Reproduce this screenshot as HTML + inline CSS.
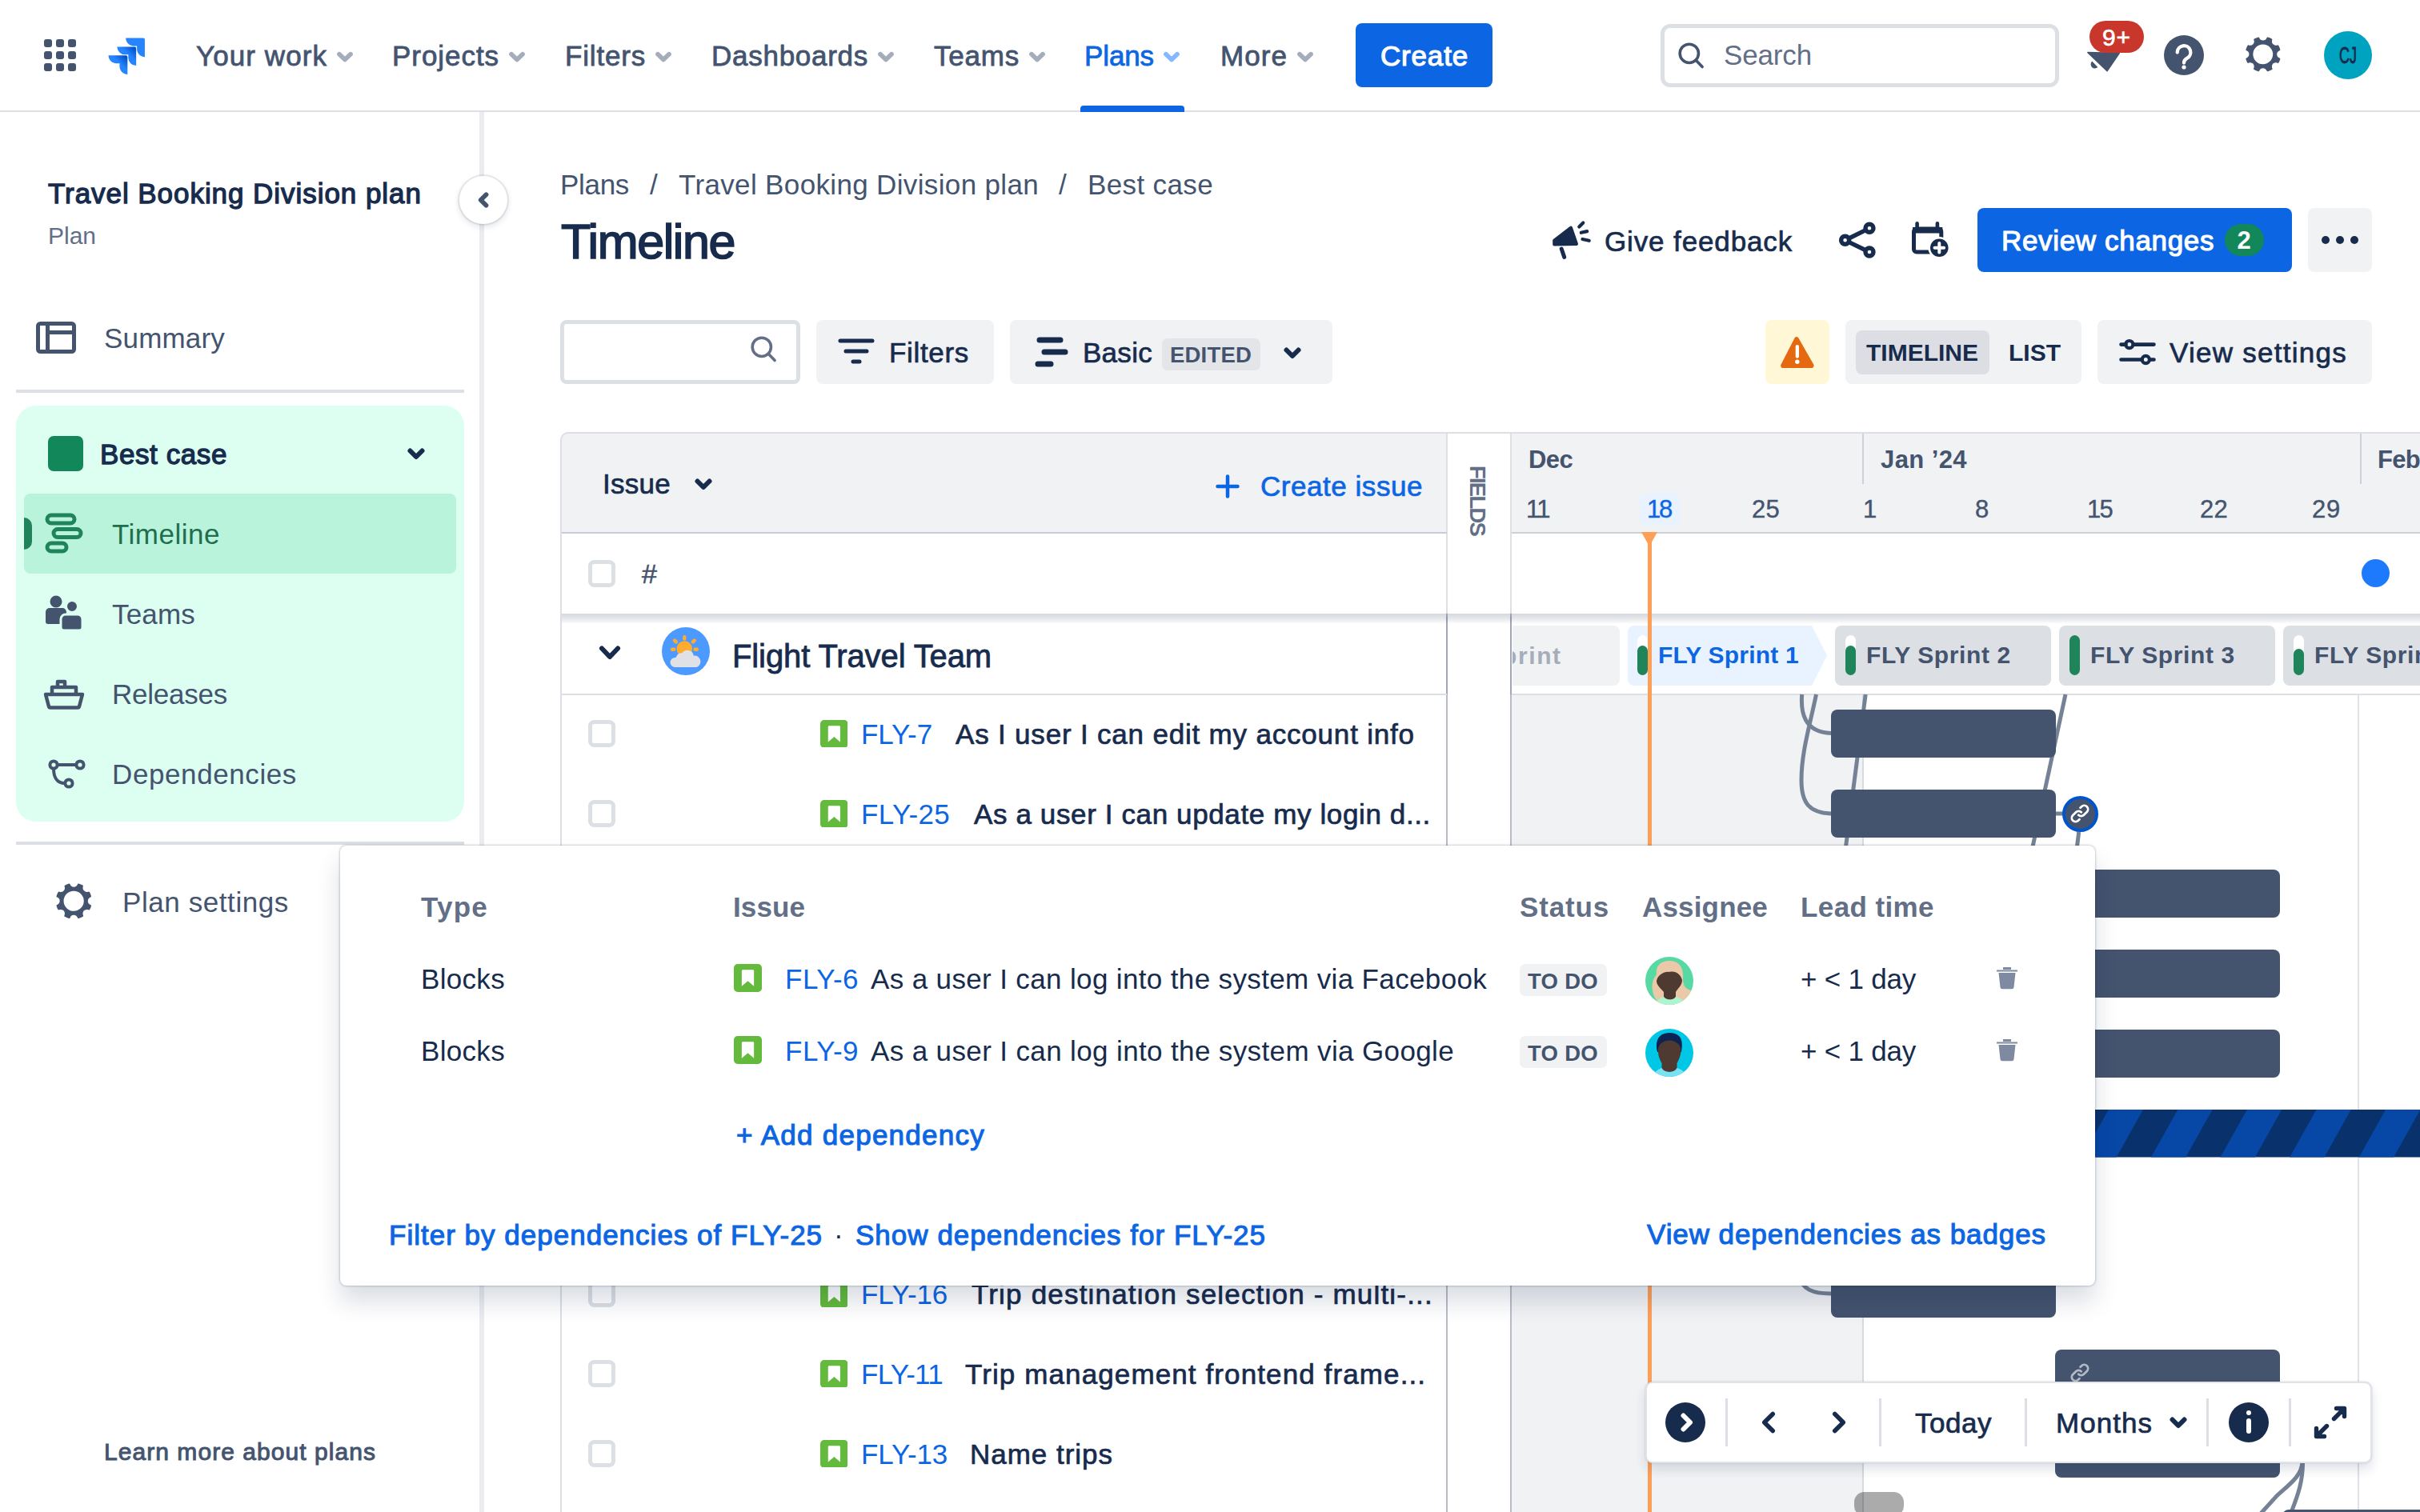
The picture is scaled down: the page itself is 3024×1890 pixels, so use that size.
<!DOCTYPE html>
<html><head><meta charset="utf-8"><title>Timeline - Jira</title><style>
html,body{margin:0;padding:0;}
body{width:3024px;height:1890px;position:relative;overflow:hidden;background:#fff;font-family:"Liberation Sans", sans-serif;}
.a{position:absolute;box-sizing:border-box;}
.t{position:absolute;white-space:pre;line-height:1;font-family:"Liberation Sans", sans-serif;}

</style></head><body>
<div class="a" style="left:598.5px;top:140px;width:6.2px;height:1750px;background:#EBECF0;"></div>
<div class="a" style="left:574px;top:220px;width:60px;height:60px;background:#fff;border-radius:30px;box-shadow:0 0 0 2px rgba(9,30,66,0.08),0 3px 8px rgba(9,30,66,0.14);"></div>
<svg class="a" style="left:574px;top:220px;" width="60" height="60" viewBox="0 0 24 24"><path d="M13.4 9.3 L10.7 12 L13.4 14.7" fill="none" stroke="#44546F" stroke-width="2.3" stroke-linecap="round" stroke-linejoin="round"/></svg>
<div class="t" style="left:60.0px;top:223.9px;font-size:35px;color:#172B4D;letter-spacing:0.95px;-webkit-text-stroke:1.3px #172B4D;">Travel Booking Division plan</div>
<div class="t" style="left:60.0px;top:280.3px;font-size:30px;color:#626F86;letter-spacing:-0.01px;">Plan</div>
<svg class="a" style="left:45px;top:400px;" width="50" height="44" viewBox="0 0 50 40"><rect x="2.5" y="2.5" width="45" height="35" rx="3" fill="none" stroke="#44546F" stroke-width="5"/><path d="M14.5 3v35M14.5 13.5H47" stroke="#44546F" stroke-width="5" fill="none"/></svg>
<div class="t" style="left:130.0px;top:404.5px;font-size:35px;color:#44546F;letter-spacing:0.18px;">Summary</div>
<div class="a" style="left:20px;top:487px;width:560px;height:4px;background:#DCDFE4;"></div>
<div class="a" style="left:20px;top:507px;width:560px;height:520px;background:#DCFFF1;border-radius:25px;"></div>
<div class="a" style="left:60px;top:545px;width:44px;height:44px;background:#12875A;border-radius:7px;"></div>
<div class="t" style="left:125.0px;top:549.9px;font-size:35px;color:#172B4D;letter-spacing:0.59px;-webkit-text-stroke:1.3px #172B4D;">Best case</div>
<svg class="a" style="left:490px;top:537px;" width="60" height="60" viewBox="0 0 24 24"><path d="M9 10.6 L12 13.6 L15 10.6" fill="none" stroke="#172B4D" stroke-width="2.4" stroke-linecap="round" stroke-linejoin="round"/></svg>
<div class="a" style="left:30px;top:617px;width:540px;height:100px;background:#BAF3DB;border-radius:8px;"></div>
<div class="a" style="left:30px;top:647px;width:10px;height:40px;background:#1F845A;border-radius:0 10px 10px 0;"></div>
<svg class="a" style="left:56px;top:641px;" width="48" height="52" viewBox="0 0 48 52"><rect x="3" y="3" width="34" height="10" rx="5" fill="none" stroke="#1F845A" stroke-width="5"/><rect x="11" y="20.5" width="34" height="10" rx="5" fill="none" stroke="#1F845A" stroke-width="5"/><rect x="3" y="38" width="24" height="10" rx="5" fill="none" stroke="#1F845A" stroke-width="5"/></svg>
<div class="t" style="left:140.0px;top:649.5px;font-size:35px;color:#216E4E;letter-spacing:0.50px;">Timeline</div>
<svg class="a" style="left:56px;top:743px;" width="48" height="48" viewBox="0 0 48 48"><circle cx="14" cy="9" r="7.5" fill="#44546F"/><path d="M1 22a5 5 0 0 1 5-5h16a5 5 0 0 1 5 5v12a3 3 0 0 1-3 3H4a3 3 0 0 1-3-3z" fill="#44546F"/><circle cx="34" cy="15" r="7.5" fill="#44546F" stroke="#DCFFF1" stroke-width="3"/><path d="M20 31a6 6 0 0 1 6-6h15a6 6 0 0 1 6 6v10a4 4 0 0 1-4 4H24a4 4 0 0 1-4-4z" fill="#44546F" stroke="#DCFFF1" stroke-width="3"/></svg>
<div class="t" style="left:140.0px;top:749.5px;font-size:35px;color:#44546F;letter-spacing:0.18px;">Teams</div>
<svg class="a" style="left:54px;top:848px;" width="52" height="40" viewBox="0 0 52 40"><path d="M3 20h46l-4 15a2 2 0 0 1-2 1.5H9a2 2 0 0 1-2-1.5z" fill="none" stroke="#44546F" stroke-width="4.5" stroke-linejoin="round"/><path d="M11 19v-8h30v8" fill="none" stroke="#44546F" stroke-width="4.5" stroke-linejoin="round"/><path d="M18 10V4h9v6" fill="none" stroke="#44546F" stroke-width="4.5" stroke-linejoin="round"/></svg>
<div class="t" style="left:140.0px;top:849.5px;font-size:35px;color:#44546F;letter-spacing:-0.24px;">Releases</div>
<svg class="a" style="left:60px;top:948px;" width="48" height="40" viewBox="0 0 48 40"><circle cx="7" cy="8" r="4.6" fill="none" stroke="#44546F" stroke-width="4"/><circle cx="40" cy="8" r="4.6" fill="none" stroke="#44546F" stroke-width="4"/><circle cx="26" cy="31" r="4.6" fill="none" stroke="#44546F" stroke-width="4"/><path d="M12 8H35M7 13c0 10 4 18 14 18" fill="none" stroke="#44546F" stroke-width="4"/></svg>
<div class="t" style="left:140.0px;top:949.5px;font-size:35px;color:#44546F;letter-spacing:0.60px;">Dependencies</div>
<div class="a" style="left:20px;top:1052px;width:560px;height:4px;background:#DCDFE4;"></div>
<svg class="a" style="left:62.8px;top:1097px;" width="60" height="60" viewBox="0 0 24 24"><path d="M11.701 16.7a5.002 5.002 0 1 1 0-10.003 5.002 5.002 0 0 1 0 10.004m8.368-3.117a1.995 1.995 0 0 1-1.346-1.885c0-.876.563-1.613 1.345-1.885a.48.48 0 0 0 .315-.574 8.947 8.947 0 0 0-.836-1.993.477.477 0 0 0-.598-.195 2.04 2.04 0 0 1-1.29.08 1.988 1.988 0 0 1-1.404-1.395 2.04 2.04 0 0 1 .076-1.297.478.478 0 0 0-.196-.597 8.98 8.98 0 0 0-1.975-.826.479.479 0 0 0-.574.314 1.995 1.995 0 0 1-1.885 1.346 1.994 1.994 0 0 1-1.884-1.345.482.482 0 0 0-.575-.315c-.708.2-1.379.485-2.004.842a.47.47 0 0 0-.198.582A2.002 2.002 0 0 1 4.445 7.06a.478.478 0 0 0-.595.196 8.946 8.946 0 0 0-.833 1.994.48.48 0 0 0 .308.572 1.995 1.995 0 0 1 1.323 1.877c0 .867-.552 1.599-1.324 1.877a.479.479 0 0 0-.308.57 8.99 8.99 0 0 0 .723 1.79.477.477 0 0 0 .624.194c.595-.273 1.343-.264 2.104.238.117.077.225.185.302.3.527.8.512 1.58.198 2.188a.473.473 0 0 0 .168.628 8.946 8.946 0 0 0 2.11.897.474.474 0 0 0 .57-.313 1.995 1.995 0 0 1 1.886-1.353c.878 0 1.618.567 1.887 1.353a.475.475 0 0 0 .57.313 8.964 8.964 0 0 0 2.084-.883.473.473 0 0 0 .167-.631c-.318-.608-.337-1.393.191-2.195.077-.116.185-.225.302-.302.772-.511 1.527-.513 2.125-.23a.477.477 0 0 0 .628-.19 8.925 8.925 0 0 0 .728-1.793.478.478 0 0 0-.314-.573" fill="#44546F" fill-rule="evenodd"/></svg>
<div class="t" style="left:153.0px;top:1109.9px;font-size:35px;color:#44546F;letter-spacing:0.58px;">Plan settings</div>
<div class="t" style="left:130.0px;top:1800.3px;font-size:30px;color:#44546F;letter-spacing:1.05px;-webkit-text-stroke:1.0px #44546F;">Learn more about plans</div>
<div class="t" style="left:700.0px;top:212.9px;font-size:35px;color:#44546F;letter-spacing:-0.31px;">Plans</div>
<div class="t" style="left:812.0px;top:212.9px;font-size:35px;color:#44546F;">/</div>
<div class="t" style="left:848.0px;top:212.9px;font-size:35px;color:#44546F;letter-spacing:0.35px;">Travel Booking Division plan</div>
<div class="t" style="left:1323.0px;top:212.9px;font-size:35px;color:#44546F;">/</div>
<div class="t" style="left:1359.0px;top:212.9px;font-size:35px;color:#44546F;letter-spacing:0.37px;">Best case</div>
<div class="t" style="left:701.0px;top:271.7px;font-size:61px;color:#172B4D;letter-spacing:-1.41px;-webkit-text-stroke:1.7px #172B4D;">Timeline</div>
<svg class="a" style="left:1938px;top:275px;" width="54" height="52" viewBox="0 0 54 52"><path d="M4.2 25.5 L25 9.6 L32 30 L4.2 30.5z" fill="#172B4D" stroke="#172B4D" stroke-width="4" stroke-linejoin="round"/><path d="M13.2 36l3.5 10.4" stroke="#172B4D" stroke-width="5" stroke-linecap="round"/><path d="M35.3 8.4l5-5M37.8 15.8l7.4-1.7M39.5 24l8.2 1.8" stroke="#172B4D" stroke-width="4.2" stroke-linecap="round"/></svg>
<div class="t" style="left:2005.0px;top:283.9px;font-size:35px;color:#172B4D;letter-spacing:0.87px;-webkit-text-stroke:0.7px #172B4D;">Give feedback</div>
<svg class="a" style="left:2296px;top:276px;" width="52" height="48" viewBox="0 0 52 48"><g fill="none" stroke="#172B4D" stroke-width="5.4"><circle cx="9.6" cy="24.3" r="5"/><circle cx="40" cy="9.3" r="5"/><circle cx="40" cy="39" r="5"/><path d="M14.3 22L35.3 11.6M14.3 26.6L35.3 36.8"/></g></svg>
<svg class="a" style="left:2385px;top:275px;" width="54" height="52" viewBox="0 0 54 52"><rect x="6.5" y="10.9" width="34.3" height="29" rx="3.5" fill="none" stroke="#172B4D" stroke-width="5"/><path d="M5 9h37.3v7.5H5z" fill="#172B4D"/><path d="M10.6 4.2v6M35.9 4.2v6" stroke="#172B4D" stroke-width="4.6" stroke-linecap="round"/><circle cx="38.3" cy="34.8" r="12.6" fill="#172B4D" stroke="#fff" stroke-width="2.6"/><path d="M38.3 29v11.6M32.5 34.8h11.6" stroke="#fff" stroke-width="4" stroke-linecap="round"/></svg>
<div class="a" style="left:2471px;top:260px;width:393px;height:80px;background:#0C66E4;border-radius:8px;"></div>
<div class="t" style="left:2501.0px;top:282.5px;font-size:35px;color:#fff;letter-spacing:0.66px;-webkit-text-stroke:1.1px #fff;">Review changes</div>
<div class="a" style="left:2780px;top:280px;width:48.5px;height:40px;background:#12875A;border-radius:20px;"></div>
<div class="t" style="left:2795.5px;top:285.4px;font-size:31px;color:#fff;font-weight:700;">2</div>
<div class="a" style="left:2884px;top:260px;width:80px;height:80px;background:#F1F2F4;border-radius:8px;"></div>
<svg class="a" style="left:2900px;top:290px;" width="48" height="20" viewBox="0 0 48 20"><circle cx="6" cy="10" r="5" fill="#172B4D"/><circle cx="24" cy="10" r="5" fill="#172B4D"/><circle cx="42" cy="10" r="5" fill="#172B4D"/></svg>
<div class="a" style="left:700px;top:400px;width:300px;height:80px;background:#fff;border-radius:8px;border:5px solid #DCDFE4;"></div>
<svg class="a" style="left:933px;top:415px;" width="43" height="43" viewBox="0 0 24 24"><circle cx="10.5" cy="10.5" r="6.5" fill="none" stroke="#626F86" stroke-width="2.0"/><path d="M15.3 15.4 L19.6 19.8" stroke="#626F86" stroke-width="2.0" stroke-linecap="round"/></svg>
<div class="a" style="left:1020px;top:400px;width:222px;height:80px;background:#F1F2F4;border-radius:8px;"></div>
<svg class="a" style="left:1047px;top:422px;" width="46" height="36" viewBox="0 0 46 36"><path d="M3 4h40M10 17h26M19 30h8" stroke="#172B4D" stroke-width="5" stroke-linecap="round"/></svg>
<div class="t" style="left:1111.0px;top:423.2px;font-size:35px;color:#172B4D;letter-spacing:0.67px;-webkit-text-stroke:0.7px #172B4D;">Filters</div>
<div class="a" style="left:1262px;top:400px;width:403px;height:80px;background:#F1F2F4;border-radius:8px;"></div>
<svg class="a" style="left:1293px;top:420px;" width="42" height="40" viewBox="0 0 42 40"><path d="M6 5h26M12 20h26M4 35h16" stroke="#172B4D" stroke-width="7" stroke-linecap="round"/></svg>
<div class="t" style="left:1353.0px;top:423.2px;font-size:35px;color:#172B4D;letter-spacing:0.28px;-webkit-text-stroke:0.7px #172B4D;">Basic</div>
<div class="a" style="left:1452px;top:423px;width:123px;height:40px;background:#E3E5E9;border-radius:7px;"></div>
<div class="t" style="left:1462.0px;top:429.6px;font-size:27.5px;color:#44546F;font-weight:700;letter-spacing:0.19px;">EDITED</div>
<svg class="a" style="left:1585px;top:411px;" width="60" height="60" viewBox="0 0 24 24"><path d="M9 10.6 L12 13.6 L15 10.6" fill="none" stroke="#172B4D" stroke-width="2.4" stroke-linecap="round" stroke-linejoin="round"/></svg>
<div class="a" style="left:2206px;top:400px;width:80px;height:80px;background:#FFF7D6;border-radius:8px;"></div>
<svg class="a" style="left:2224px;top:418.5px;" width="43.7" height="41.8" viewBox="0 0 46 44"><path d="M23 4L43 39a2 2 0 0 1-2 3H5a2 2 0 0 1-2-3L21 4a2 2 0 0 1 2 0z" fill="#E56910" stroke="#E56910" stroke-width="3" stroke-linejoin="round"/><path d="M23 15v13" stroke="#fff" stroke-width="4.5" stroke-linecap="round"/><circle cx="23" cy="35" r="2.8" fill="#fff"/></svg>
<div class="a" style="left:2306px;top:400px;width:295px;height:80px;background:#F1F2F4;border-radius:8px;"></div>
<div class="a" style="left:2319px;top:413px;width:167px;height:54.5px;background:#DDDEE3;border-radius:8px;"></div>
<div class="t" style="left:2332.0px;top:425.6px;font-size:30px;color:#172B4D;font-weight:700;">TIMELINE</div>
<div class="t" style="left:2510.0px;top:425.6px;font-size:30px;color:#172B4D;font-weight:700;">LIST</div>
<div class="a" style="left:2621px;top:400px;width:343px;height:80px;background:#F1F2F4;border-radius:8px;"></div>
<svg class="a" style="left:2648px;top:420px;" width="46" height="40" viewBox="0 0 46 40"><path d="M2.5 10.6h6M18 10.6h25.5M2.5 29.5h26M38.5 29.5h5" stroke="#172B4D" stroke-width="4.6" stroke-linecap="round"/><circle cx="12.8" cy="10.6" r="4.6" fill="none" stroke="#172B4D" stroke-width="4.2"/><circle cx="33.3" cy="29.5" r="4.6" fill="none" stroke="#172B4D" stroke-width="4.2"/></svg>
<div class="t" style="left:2711.0px;top:422.9px;font-size:35px;color:#172B4D;letter-spacing:1.26px;-webkit-text-stroke:0.7px #172B4D;">View settings</div>
<div class="a" style="left:700px;top:540px;width:2400px;height:127px;background:#F1F2F4;border-radius:10px 0 0 0;border:2px solid #DCDFE4;"></div>
<div class="a" style="left:700px;top:666px;width:2px;height:1300px;background:#DCDFE4;"></div>
<div class="a" style="left:1807px;top:542px;width:82px;height:1400px;background:#fff;border-left:2px solid #B6BCC8;border-right:2px solid #B6BCC8;"></div>
<div class="a" style="left:1807px;top:542px;width:82px;height:225px;border-left:2px solid #DCDFE4;border-right:2px solid #DCDFE4;"></div>
<div class="a" style="left:1807px;top:771px;width:82px;height:97px;border-left:2px solid #9FA8B8;border-right:2px solid #9FA8B8;"></div>
<div class="t" style="left:1847.0px;top:612.6px;font-size:27.5px;color:#626F86;font-weight:700;letter-spacing:-1.80px;transform:rotate(90deg);transform-origin:0 0;margin-left:12.5px;margin-top:-31px;">FIELDS</div>
<div class="t" style="left:753.0px;top:587.2px;font-size:35px;color:#172B4D;letter-spacing:0.27px;-webkit-text-stroke:0.7px #172B4D;">Issue</div>
<svg class="a" style="left:848.5px;top:574.5px;" width="60" height="60" viewBox="0 0 24 24"><path d="M9 10.6 L12 13.6 L15 10.6" fill="none" stroke="#172B4D" stroke-width="2.4" stroke-linecap="round" stroke-linejoin="round"/></svg>
<svg class="a" style="left:1516px;top:590px;" width="36" height="36" viewBox="0 0 36 36"><path d="M18 5.5v25M5.5 18h25" stroke="#0C66E4" stroke-width="4.5" stroke-linecap="round"/></svg>
<div class="t" style="left:1575.0px;top:589.9px;font-size:35px;color:#0C66E4;letter-spacing:0.54px;-webkit-text-stroke:0.7px #0C66E4;">Create issue</div>
<div class="a" style="left:702px;top:665px;width:1106px;height:2px;background:#C7CCD6;"></div>
<div class="a" style="left:734.7px;top:699.7px;width:34.5px;height:34.5px;background:#fff;border-radius:7.5px;border:5px solid #DCDFE4;"></div>
<div class="t" style="left:802.0px;top:700.4px;font-size:34px;color:#44546F;letter-spacing:3.08px;-webkit-text-stroke:0.6px #44546F;">#</div>
<div class="a" style="left:702px;top:766.5px;width:2400px;height:13px;background:linear-gradient(rgba(9,30,66,0.17),rgba(9,30,66,0.12) 40%,rgba(9,30,66,0));"></div>
<svg class="a" style="left:740px;top:795px;" width="44" height="40" viewBox="0 0 44 40"><path d="M12 15.5L22 26L32 15.5" fill="none" stroke="#172B4D" stroke-width="6" stroke-linecap="round" stroke-linejoin="round"/></svg>
<div class="a" style="left:827px;top:784px;width:60px;height:60px;background:#4C9AFF;border-radius:30px;"></div>
<svg class="a" style="left:827px;top:784px;" width="60" height="60" viewBox="0 0 60 60"><circle cx="28.3" cy="27" r="9.8" fill="#FFAB2E"/><g stroke="#FFAB2E" stroke-width="4.4" stroke-linecap="round"><path d="M28.3 12.2v2.4M16 16.6l1.8 1.8M40.7 16.6l-1.8 1.8M13 27.8h2.2M41.6 27.8h2.2"/></g><path d="M16.5 50a6 6 0 0 1 0-12 2 2 0 0 0 1.7-1.3 6 6 0 0 1 7-4.2 8 8 0 0 1 14.6 3.2 7.4 7.4 0 0 1 3.6 14.3z" fill="#DFE1E6"/></svg>
<div class="t" style="left:915.0px;top:799.5px;font-size:40px;color:#172B4D;letter-spacing:-0.11px;-webkit-text-stroke:0.8px #172B4D;">Flight Travel Team</div>
<div class="a" style="left:702px;top:867px;width:1106px;height:2px;background:#DCDFE4;"></div>
<div class="a" style="left:734.7px;top:899.7px;width:34.5px;height:34.5px;background:#fff;border-radius:7.5px;border:5px solid #DCDFE4;"></div>
<svg class="a" style="left:1024.8px;top:899.7px;" width="34.7" height="34.7" viewBox="0 0 16 16"><rect width="16" height="16" rx="2.2" fill="#63BA3C"/><path d="M5.1 3.3h5.8a.6.6 0 0 1 .6.6v8.8l-3.5-3-3.5 3V3.9a.6.6 0 0 1 .6-.6z" fill="#fff"/></svg>
<div class="t" style="left:1076.0px;top:899.7px;font-size:35px;color:#0C66E4;letter-spacing:-0.10px;">FLY-7</div>
<div class="t" style="left:1194.0px;top:899.7px;font-size:35px;color:#172B4D;letter-spacing:0.81px;-webkit-text-stroke:0.7px #172B4D;">As I user I can edit my account info</div>
<div class="a" style="left:734.7px;top:999.7px;width:34.5px;height:34.5px;background:#fff;border-radius:7.5px;border:5px solid #DCDFE4;"></div>
<svg class="a" style="left:1024.8px;top:999.7px;" width="34.7" height="34.7" viewBox="0 0 16 16"><rect width="16" height="16" rx="2.2" fill="#63BA3C"/><path d="M5.1 3.3h5.8a.6.6 0 0 1 .6.6v8.8l-3.5-3-3.5 3V3.9a.6.6 0 0 1 .6-.6z" fill="#fff"/></svg>
<div class="t" style="left:1076.0px;top:999.7px;font-size:35px;color:#0C66E4;letter-spacing:0.34px;">FLY-25</div>
<div class="t" style="left:1217.0px;top:999.7px;font-size:35px;color:#172B4D;letter-spacing:0.62px;-webkit-text-stroke:0.7px #172B4D;">As a user I can update my login d...</div>
<div class="a" style="left:734.7px;top:1099.7px;width:34.5px;height:34.5px;background:#fff;border-radius:7.5px;border:5px solid #DCDFE4;"></div>
<svg class="a" style="left:1024.8px;top:1099.7px;" width="34.7" height="34.7" viewBox="0 0 16 16"><rect width="16" height="16" rx="2.2" fill="#63BA3C"/><path d="M5.1 3.3h5.8a.6.6 0 0 1 .6.6v8.8l-3.5-3-3.5 3V3.9a.6.6 0 0 1 .6-.6z" fill="#fff"/></svg>
<div class="t" style="left:1076.0px;top:1099.7px;font-size:35px;color:#0C66E4;letter-spacing:0.34px;">FLY-26</div>
<div class="t" style="left:1217.0px;top:1099.7px;font-size:35px;color:#172B4D;letter-spacing:0.39px;-webkit-text-stroke:0.7px #172B4D;">As a user I can delete my account</div>
<div class="a" style="left:734.7px;top:1199.7px;width:34.5px;height:34.5px;background:#fff;border-radius:7.5px;border:5px solid #DCDFE4;"></div>
<svg class="a" style="left:1024.8px;top:1199.7px;" width="34.7" height="34.7" viewBox="0 0 16 16"><rect width="16" height="16" rx="2.2" fill="#63BA3C"/><path d="M5.1 3.3h5.8a.6.6 0 0 1 .6.6v8.8l-3.5-3-3.5 3V3.9a.6.6 0 0 1 .6-.6z" fill="#fff"/></svg>
<div class="t" style="left:1076.0px;top:1199.7px;font-size:35px;color:#0C66E4;letter-spacing:0.30px;">FLY-6</div>
<div class="t" style="left:1198.0px;top:1199.7px;font-size:35px;color:#172B4D;letter-spacing:1.22px;-webkit-text-stroke:0.7px #172B4D;">As a user I can log into the syste...</div>
<div class="a" style="left:734.7px;top:1299.7px;width:34.5px;height:34.5px;background:#fff;border-radius:7.5px;border:5px solid #DCDFE4;"></div>
<svg class="a" style="left:1024.8px;top:1299.7px;" width="34.7" height="34.7" viewBox="0 0 16 16"><rect width="16" height="16" rx="2.2" fill="#63BA3C"/><path d="M5.1 3.3h5.8a.6.6 0 0 1 .6.6v8.8l-3.5-3-3.5 3V3.9a.6.6 0 0 1 .6-.6z" fill="#fff"/></svg>
<div class="t" style="left:1076.0px;top:1299.7px;font-size:35px;color:#0C66E4;letter-spacing:0.30px;">FLY-9</div>
<div class="t" style="left:1198.0px;top:1299.7px;font-size:35px;color:#172B4D;letter-spacing:1.22px;-webkit-text-stroke:0.7px #172B4D;">As a user I can log into the syste...</div>
<div class="a" style="left:734.7px;top:1399.7px;width:34.5px;height:34.5px;background:#fff;border-radius:7.5px;border:5px solid #DCDFE4;"></div>
<svg class="a" style="left:1024.8px;top:1399.7px;" width="34.7" height="34.7" viewBox="0 0 16 16"><rect width="16" height="16" rx="2.2" fill="#63BA3C"/><path d="M5.1 3.3h5.8a.6.6 0 0 1 .6.6v8.8l-3.5-3-3.5 3V3.9a.6.6 0 0 1 .6-.6z" fill="#fff"/></svg>
<div class="t" style="left:1076.0px;top:1399.7px;font-size:35px;color:#0C66E4;letter-spacing:-0.16px;">FLY-10</div>
<div class="t" style="left:1214.0px;top:1399.7px;font-size:35px;color:#172B4D;letter-spacing:-0.08px;-webkit-text-stroke:0.7px #172B4D;">Trip planning</div>
<div class="a" style="left:734.7px;top:1499.7px;width:34.5px;height:34.5px;background:#fff;border-radius:7.5px;border:5px solid #DCDFE4;"></div>
<svg class="a" style="left:1024.8px;top:1499.7px;" width="34.7" height="34.7" viewBox="0 0 16 16"><rect width="16" height="16" rx="2.2" fill="#63BA3C"/><path d="M5.1 3.3h5.8a.6.6 0 0 1 .6.6v8.8l-3.5-3-3.5 3V3.9a.6.6 0 0 1 .6-.6z" fill="#fff"/></svg>
<div class="t" style="left:1076.0px;top:1499.7px;font-size:35px;color:#0C66E4;letter-spacing:-0.16px;">FLY-15</div>
<div class="t" style="left:1214.0px;top:1499.7px;font-size:35px;color:#172B4D;letter-spacing:0.54px;-webkit-text-stroke:0.7px #172B4D;">Trip destination selection</div>
<div class="a" style="left:734.7px;top:1599.7px;width:34.5px;height:34.5px;background:#fff;border-radius:7.5px;border:5px solid #DCDFE4;"></div>
<svg class="a" style="left:1024.8px;top:1599.7px;" width="34.7" height="34.7" viewBox="0 0 16 16"><rect width="16" height="16" rx="2.2" fill="#63BA3C"/><path d="M5.1 3.3h5.8a.6.6 0 0 1 .6.6v8.8l-3.5-3-3.5 3V3.9a.6.6 0 0 1 .6-.6z" fill="#fff"/></svg>
<div class="t" style="left:1076.0px;top:1599.7px;font-size:35px;color:#0C66E4;letter-spacing:-0.16px;">FLY-16</div>
<div class="t" style="left:1214.0px;top:1599.7px;font-size:35px;color:#172B4D;letter-spacing:1.19px;-webkit-text-stroke:0.7px #172B4D;">Trip destination selection - multi-...</div>
<div class="a" style="left:734.7px;top:1699.7px;width:34.5px;height:34.5px;background:#fff;border-radius:7.5px;border:5px solid #DCDFE4;"></div>
<svg class="a" style="left:1024.8px;top:1699.7px;" width="34.7" height="34.7" viewBox="0 0 16 16"><rect width="16" height="16" rx="2.2" fill="#63BA3C"/><path d="M5.1 3.3h5.8a.6.6 0 0 1 .6.6v8.8l-3.5-3-3.5 3V3.9a.6.6 0 0 1 .6-.6z" fill="#fff"/></svg>
<div class="t" style="left:1076.0px;top:1699.7px;font-size:35px;color:#0C66E4;letter-spacing:-0.73px;">FLY-11</div>
<div class="t" style="left:1206.0px;top:1699.7px;font-size:35px;color:#172B4D;letter-spacing:1.11px;-webkit-text-stroke:0.7px #172B4D;">Trip management frontend frame...</div>
<div class="a" style="left:734.7px;top:1799.7px;width:34.5px;height:34.5px;background:#fff;border-radius:7.5px;border:5px solid #DCDFE4;"></div>
<svg class="a" style="left:1024.8px;top:1799.7px;" width="34.7" height="34.7" viewBox="0 0 16 16"><rect width="16" height="16" rx="2.2" fill="#63BA3C"/><path d="M5.1 3.3h5.8a.6.6 0 0 1 .6.6v8.8l-3.5-3-3.5 3V3.9a.6.6 0 0 1 .6-.6z" fill="#fff"/></svg>
<div class="t" style="left:1076.0px;top:1799.7px;font-size:35px;color:#0C66E4;letter-spacing:-0.16px;">FLY-13</div>
<div class="t" style="left:1212.0px;top:1799.7px;font-size:35px;color:#172B4D;letter-spacing:0.98px;-webkit-text-stroke:0.7px #172B4D;">Name trips</div>
<div class="a" style="left:1889px;top:667px;width:1135px;height:1223px;background:#fff;"></div>
<div class="a" style="left:1889px;top:869px;width:439px;height:1021px;background:#F1F2F4;"></div>
<div class="a" style="left:1889px;top:766.5px;width:1135px;height:13px;background:linear-gradient(rgba(9,30,66,0.17),rgba(9,30,66,0.12) 40%,rgba(9,30,66,0));"></div>
<div class="a" style="left:2327px;top:542px;width:2px;height:63px;background:#CDD1DA;"></div>
<div class="a" style="left:2949px;top:542px;width:2px;height:63px;background:#CDD1DA;"></div>
<div class="t" style="left:1910.0px;top:558.5px;font-size:31px;color:#44546F;font-weight:700;letter-spacing:-0.62px;">Dec</div>
<div class="t" style="left:2350.0px;top:558.5px;font-size:31px;color:#44546F;font-weight:700;letter-spacing:0.41px;">Jan ’24</div>
<div class="t" style="left:2971.0px;top:558.5px;font-size:31px;color:#44546F;font-weight:700;letter-spacing:-0.71px;">Feb</div>
<div class="a" style="left:2049.3px;top:617.3px;width:49.4px;height:39.7px;background:#E9F2FF;border-radius:7px;"></div>
<div class="t" style="left:1907.0px;top:621.2px;font-size:31px;color:#44546F;letter-spacing:-1.59px;-webkit-text-stroke:0.4px #44546F;">11</div>
<div class="t" style="left:2189.0px;top:621.2px;font-size:31px;color:#44546F;letter-spacing:0.26px;-webkit-text-stroke:0.4px #44546F;">25</div>
<div class="t" style="left:2328.0px;top:621.2px;font-size:31px;color:#44546F;letter-spacing:-3.25px;-webkit-text-stroke:0.4px #44546F;">1</div>
<div class="t" style="left:2468.0px;top:621.2px;font-size:31px;color:#44546F;letter-spacing:1.75px;-webkit-text-stroke:0.4px #44546F;">8</div>
<div class="t" style="left:2608.0px;top:621.2px;font-size:31px;color:#44546F;letter-spacing:-1.74px;-webkit-text-stroke:0.4px #44546F;">15</div>
<div class="t" style="left:2749.0px;top:621.2px;font-size:31px;color:#44546F;letter-spacing:0.26px;-webkit-text-stroke:0.4px #44546F;">22</div>
<div class="t" style="left:2889.0px;top:621.2px;font-size:31px;color:#44546F;letter-spacing:0.76px;-webkit-text-stroke:0.4px #44546F;">29</div>
<div class="t" style="left:2058.0px;top:621.2px;font-size:31px;color:#0C66E4;letter-spacing:-2.24px;-webkit-text-stroke:0.4px #0C66E4;">18</div>
<div class="a" style="left:1889px;top:665px;width:1135px;height:2px;background:#CBD0D9;"></div>
<div class="a" style="left:2327px;top:869px;width:2px;height:1021px;background:#D5D9E0;"></div>
<div class="a" style="left:2946px;top:869px;width:2px;height:1021px;background:#DFE1E7;"></div>
<div class="a" style="left:2951px;top:699px;width:35px;height:35px;background:#1D7AFC;border-radius:18px;"></div>
<div class="a" style="left:1889px;top:867px;width:1135px;height:2px;background:#DCDFE4;"></div>
<div class="a" style="left:1890px;top:782px;width:134px;height:75px;background:#F1F2F4;border-radius:0 8px 8px 0;overflow:hidden;"><div class="t" style="left:-13px;top:22.7px;font-size:30px;font-weight:700;color:#A5ADBA;letter-spacing:1.6px">print</div></div>
<svg class="a" style="left:2034px;top:782px;" width="250" height="75" viewBox="0 0 250 75"><path d="M8 0H230L249 37.5L230 75H8a8 8 0 0 1-8-8V8a8 8 0 0 1 8-8z" fill="#E9F2FF"/></svg>
<div class="t" style="left:2072.0px;top:804.0px;font-size:30px;color:#0C66E4;font-weight:700;letter-spacing:0.22px;">FLY Sprint 1</div>
<div class="a" style="left:2293px;top:782px;width:270px;height:75px;background:#DCDFE4;border-radius:8px;"></div>
<div class="t" style="left:2332.0px;top:804.0px;font-size:30px;color:#44546F;font-weight:700;letter-spacing:0.63px;">FLY Sprint 2</div>
<div class="a" style="left:2573px;top:782px;width:270px;height:75px;background:#DCDFE4;border-radius:8px;"></div>
<div class="t" style="left:2612.0px;top:804.0px;font-size:30px;color:#44546F;font-weight:700;letter-spacing:0.63px;">FLY Sprint 3</div>
<div class="a" style="left:2853px;top:782px;width:270px;height:75px;background:#DCDFE4;border-radius:8px;"></div>
<div class="t" style="left:2892.0px;top:804.0px;font-size:30px;color:#44546F;font-weight:700;letter-spacing:0.63px;">FLY Sprint 4</div>
<div class="a" style="left:2046px;top:794px;width:13px;height:50px;background:#fff;border-radius:6.5px;"></div>
<div class="a" style="left:2046px;top:807px;width:13px;height:37px;background:#1F845A;border-radius:6.5px;"></div>
<div class="a" style="left:2306px;top:794px;width:13px;height:50px;background:#fff;border-radius:6.5px;"></div>
<div class="a" style="left:2306px;top:807px;width:13px;height:37px;background:#1F845A;border-radius:6.5px;"></div>
<div class="a" style="left:2586px;top:794px;width:13px;height:50px;background:#fff;border-radius:6.5px;"></div>
<div class="a" style="left:2586px;top:794px;width:13px;height:50px;background:#1F845A;border-radius:6.5px;"></div>
<div class="a" style="left:2866px;top:794px;width:13px;height:50px;background:#fff;border-radius:6.5px;"></div>
<div class="a" style="left:2866px;top:811px;width:13px;height:33px;background:#1F845A;border-radius:6.5px;"></div>
<svg class="a" style="left:0px;top:0px;" width="3024" height="1890" viewBox="0 0 3024 1890">
    <g fill="none" stroke="#758195" stroke-width="5">
      <path d="M2251.7 868 C2250 890 2254 915 2288 916.5"/>
      <path d="M2269.5 868 C2262 905 2251 940 2251 975 C2251 1005 2262 1016 2288 1017"/>
      <path d="M2331.2 868 L2305 1070"/>
      <path d="M2581 868 L2537.5 1070"/>
      <path d="M2597.7 1040 L2594 1070"/>
      <path d="M2568 1017 H2580"/>
      <path d="M2249 1596 C2252 1611 2264 1617 2288 1617"/>
      <path d="M2877 1826 C2877 1845 2860 1856 2845.5 1869.3 L2824 1893"/>
      <path d="M2877.5 1826 C2878 1850 2872 1868 2862 1893"/>
    </g></svg>
<div class="a" style="left:2288px;top:887px;width:281px;height:60px;background:#44546F;border-radius:8px;"></div>
<div class="a" style="left:2288px;top:987px;width:281px;height:60px;background:#44546F;border-radius:8px;"></div>
<div class="a" style="left:2288px;top:1587px;width:281px;height:60px;background:#44546F;border-radius:8px;"></div>
<div class="a" style="left:2568px;top:1087px;width:281px;height:60px;background:#44546F;border-radius:8px;"></div>
<div class="a" style="left:2568px;top:1187px;width:281px;height:60px;background:#44546F;border-radius:8px;"></div>
<div class="a" style="left:2568px;top:1287px;width:281px;height:60px;background:#44546F;border-radius:8px;"></div>
<div class="a" style="left:2568px;top:1687px;width:281px;height:60px;background:#44546F;border-radius:8px;"></div>
<div class="a" style="left:2568px;top:1787px;width:281px;height:60px;background:#44546F;border-radius:8px;"></div>
<div class="a" style="left:2852px;top:1887px;width:200px;height:20px;background:#44546F;border-radius:8px;"></div>
<svg class="a" style="left:2560px;top:1387.3px;" width="464" height="59.5" viewBox="0 0 464 59.5"><rect width="464" height="59.5" fill="#09326C"/><path d="M-98.5 0h43.3l-33.3 59.5h-43.3z" fill="#0747A6"/><path d="M-11.9 0h43.3l-33.3 59.5h-43.3z" fill="#0747A6"/><path d="M74.7 0h43.3l-33.3 59.5h-43.3z" fill="#0747A6"/><path d="M161.3 0h43.3l-33.3 59.5h-43.3z" fill="#0747A6"/><path d="M247.9 0h43.3l-33.3 59.5h-43.3z" fill="#0747A6"/><path d="M334.5 0h43.3l-33.3 59.5h-43.3z" fill="#0747A6"/><path d="M421.1 0h43.3l-33.3 59.5h-43.3z" fill="#0747A6"/><path d="M507.7 0h43.3l-33.3 59.5h-43.3z" fill="#0747A6"/></svg>
<div class="a" style="left:2577px;top:995px;width:44.5px;height:44.5px;background:#44546F;border-radius:22.5px;border:4.5px solid #0055CC;"></div>
<svg class="a" style="left:2585.2px;top:1003.2px;" width="28" height="28" viewBox="0 0 24 24"><g fill="none" stroke="#fff" stroke-width="2.4" stroke-linecap="round"><path d="M10.5 13.5a4 4 0 0 0 5.7 0l3.3-3.3a4 4 0 0 0-5.7-5.7l-1.3 1.3"/><path d="M13.5 10.5a4 4 0 0 0-5.7 0l-3.3 3.3a4 4 0 0 0 5.7 5.7l1.3-1.3"/></g></svg>
<svg class="a" style="left:2585px;top:1702px;" width="28" height="28" viewBox="0 0 24 24"><g fill="none" stroke="#B3B9C4" stroke-width="2.4" stroke-linecap="round"><path d="M10.5 13.5a4 4 0 0 0 5.7 0l3.3-3.3a4 4 0 0 0-5.7-5.7l-1.3 1.3"/><path d="M13.5 10.5a4 4 0 0 0-5.7 0l-3.3 3.3a4 4 0 0 0 5.7 5.7l1.3-1.3"/></g></svg>
<div class="a" style="left:2059px;top:667px;width:5px;height:1223px;background:#FE9F57;"></div>
<svg class="a" style="left:2050px;top:665px;" width="22" height="22" viewBox="0 0 22 22"><path d="M1 0h20L11 18z" fill="#FE9F57"/></svg>
<div class="a" style="left:2317px;top:1865px;width:62px;height:30px;background:rgba(0,0,0,0.33);border-radius:12.5px;"></div>
<div class="a" style="left:2055.5px;top:1726.5px;width:908px;height:102px;background:#fff;border-radius:9px;border:2px solid #E1E3E8;box-shadow:0 8px 14px rgba(9,30,66,0.13),0 0 2px rgba(9,30,66,0.2);"></div>
<div class="a" style="left:2081px;top:1753px;width:50px;height:50px;background:#172B4D;border-radius:25px;"></div>
<svg class="a" style="left:2077px;top:1748px;" width="60" height="60" viewBox="0 0 24 24"><path d="M10.6 8.6 L14 12 L10.6 15.4" fill="none" stroke="#fff" stroke-width="2.4" stroke-linecap="round" stroke-linejoin="round"/></svg>
<div class="a" style="left:2156px;top:1748px;width:3px;height:60px;background:#DCDFE4;"></div>
<div class="a" style="left:2348px;top:1748px;width:3px;height:60px;background:#DCDFE4;"></div>
<div class="a" style="left:2530px;top:1748px;width:3px;height:60px;background:#DCDFE4;"></div>
<div class="a" style="left:2757px;top:1748px;width:3px;height:60px;background:#DCDFE4;"></div>
<div class="a" style="left:2860px;top:1748px;width:3px;height:60px;background:#DCDFE4;"></div>
<svg class="a" style="left:2180px;top:1748px;" width="60" height="60" viewBox="0 0 24 24"><path d="M14.1 7.8 L9.9 12 L14.1 16.2" fill="none" stroke="#172B4D" stroke-width="2.2" stroke-linecap="round" stroke-linejoin="round"/></svg>
<svg class="a" style="left:2268px;top:1748px;" width="60" height="60" viewBox="0 0 24 24"><path d="M9.9 7.8 L14.1 12 L9.9 16.2" fill="none" stroke="#172B4D" stroke-width="2.2" stroke-linecap="round" stroke-linejoin="round"/></svg>
<div class="t" style="left:2393.0px;top:1760.7px;font-size:35px;color:#172B4D;letter-spacing:0.52px;-webkit-text-stroke:0.7px #172B4D;">Today</div>
<div class="t" style="left:2569.0px;top:1760.7px;font-size:35px;color:#172B4D;letter-spacing:1.04px;-webkit-text-stroke:0.7px #172B4D;">Months</div>
<svg class="a" style="left:2692px;top:1748px;" width="60" height="60" viewBox="0 0 24 24"><path d="M9 10.6 L12 13.6 L15 10.6" fill="none" stroke="#172B4D" stroke-width="2.4" stroke-linecap="round" stroke-linejoin="round"/></svg>
<div class="a" style="left:2785px;top:1753px;width:50px;height:50px;background:#172B4D;border-radius:25px;"></div>
<div class="a" style="left:2807px;top:1773px;width:6px;height:19px;background:#fff;border-radius:3px;"></div>
<div class="a" style="left:2807px;top:1763px;width:6px;height:6px;background:#fff;border-radius:3px;"></div>
<svg class="a" style="left:2890px;top:1756px;" width="44" height="44" viewBox="0 0 44 44"><g fill="none" stroke="#172B4D" stroke-width="5.4" stroke-linecap="round" stroke-linejoin="round"><path d="M26.5 17.5L39 5M29.5 4.5h10v10M17.5 26.5L5 39M4.5 29.5v10h10"/></g></svg>
<div class="a" style="left:425px;top:1057px;width:2193px;height:550px;background:#fff;border-radius:8px;box-shadow:0 20px 30px rgba(9,30,66,0.15),0 0 3px rgba(9,30,66,0.4);"></div>
<div class="t" style="left:526.0px;top:1115.6px;font-size:35px;color:#626F86;font-weight:700;letter-spacing:1.23px;">Type</div>
<div class="t" style="left:916.0px;top:1115.6px;font-size:35px;color:#626F86;font-weight:700;letter-spacing:0.10px;">Issue</div>
<div class="t" style="left:1899.0px;top:1115.6px;font-size:35px;color:#626F86;font-weight:700;letter-spacing:0.84px;">Status</div>
<div class="t" style="left:2052.0px;top:1115.6px;font-size:35px;color:#626F86;font-weight:700;letter-spacing:0.17px;">Assignee</div>
<div class="t" style="left:2250.0px;top:1115.6px;font-size:35px;color:#626F86;font-weight:700;letter-spacing:0.40px;">Lead time</div>
<div class="t" style="left:526.0px;top:1205.7px;font-size:35px;color:#172B4D;letter-spacing:0.32px;">Blocks</div>
<svg class="a" style="left:917px;top:1204.8px;" width="35" height="35" viewBox="0 0 16 16"><rect width="16" height="16" rx="2.2" fill="#63BA3C"/><path d="M5.1 3.3h5.8a.6.6 0 0 1 .6.6v8.8l-3.5-3-3.5 3V3.9a.6.6 0 0 1 .6-.6z" fill="#fff"/></svg>
<div class="t" style="left:981.0px;top:1205.7px;font-size:35px;color:#0C66E4;letter-spacing:0.50px;">FLY-6</div>
<div class="t" style="left:1088.0px;top:1205.7px;font-size:35px;color:#172B4D;letter-spacing:0.36px;">As a user I can log into the system via Facebook</div>
<div class="a" style="left:1899px;top:1205.2px;width:109px;height:40px;background:#F1F2F4;border-radius:7px;"></div>
<div class="t" style="left:1909.0px;top:1212.7px;font-size:27.5px;color:#44546F;font-weight:700;letter-spacing:0.28px;">TO DO</div>
<div class="t" style="left:2250.0px;top:1205.7px;font-size:35px;color:#172B4D;letter-spacing:-0.22px;">+ &lt; 1 day</div>
<svg class="a" style="left:2494px;top:1206.8px;" width="28" height="30" viewBox="0 0 28 30"><path d="M1 5.5h26v2H1z M9 2h10v3H9z" fill="#7F8AA0"/><path d="M3.5 9h21l-2 18a2.5 2.5 0 0 1-2.5 2.2H8a2.5 2.5 0 0 1-2.5-2.2z" fill="#7F8AA0"/></svg>
<div class="t" style="left:526.0px;top:1295.7px;font-size:35px;color:#172B4D;letter-spacing:0.32px;">Blocks</div>
<svg class="a" style="left:917px;top:1294.8px;" width="35" height="35" viewBox="0 0 16 16"><rect width="16" height="16" rx="2.2" fill="#63BA3C"/><path d="M5.1 3.3h5.8a.6.6 0 0 1 .6.6v8.8l-3.5-3-3.5 3V3.9a.6.6 0 0 1 .6-.6z" fill="#fff"/></svg>
<div class="t" style="left:981.0px;top:1295.7px;font-size:35px;color:#0C66E4;letter-spacing:0.50px;">FLY-9</div>
<div class="t" style="left:1088.0px;top:1295.7px;font-size:35px;color:#172B4D;letter-spacing:0.37px;">As a user I can log into the system via Google</div>
<div class="a" style="left:1899px;top:1295.2px;width:109px;height:40px;background:#F1F2F4;border-radius:7px;"></div>
<div class="t" style="left:1909.0px;top:1302.7px;font-size:27.5px;color:#44546F;font-weight:700;letter-spacing:0.28px;">TO DO</div>
<div class="t" style="left:2250.0px;top:1295.7px;font-size:35px;color:#172B4D;letter-spacing:-0.22px;">+ &lt; 1 day</div>
<svg class="a" style="left:2494px;top:1296.8px;" width="28" height="30" viewBox="0 0 28 30"><path d="M1 5.5h26v2H1z M9 2h10v3H9z" fill="#7F8AA0"/><path d="M3.5 9h21l-2 18a2.5 2.5 0 0 1-2.5 2.2H8a2.5 2.5 0 0 1-2.5-2.2z" fill="#7F8AA0"/></svg>
<svg class="a" style="left:2056px;top:1195.5px;" width="60" height="60" viewBox="0 0 60 60"><defs><clipPath id="c1"><circle cx="30" cy="30" r="30"/></clipPath></defs><g clip-path="url(#c1)"><rect width="60" height="60" fill="#57D9A3"/><path d="M15 56C6 44 7 30 14 22C12 10 22 4 31 5C43 5 48 15 47 27C47 36 50 40 57 42L58 62L14 62Z" fill="#EBC9A8"/><path d="M14 30C16 22 24 18 30 19C38 17 44 22 46 29C46 36 40 40 38 44L38 50C36 54.5 26 54.5 23 50L23 44C20 40 14 36 14 30Z" fill="#4F3A32"/><path d="M12 60C15 53 20 51 23 50C26 55 35 55 38 50C43 51 48 54 50 60L50 62L12 62Z" fill="#ABF5D1"/></g></svg>
<svg class="a" style="left:2056px;top:1285.5px;" width="60" height="60" viewBox="0 0 60 60"><defs><clipPath id="c2"><circle cx="30" cy="30" r="30"/></clipPath></defs><g clip-path="url(#c2)"><rect width="60" height="60" fill="#00C7E6"/><path d="M15 29C12 18 15 8 24 6C30 4 38 5 42 9C47 14 46 22 45 29Z" fill="#0B2253"/><path d="M16 28C15 20 22 14.5 30 14.5C38 14.5 45 20 44.5 28C44 35 41 40 39.5 43L39.5 50C37 56 24 56 20.5 50L20.5 43C19 40 16 35 16 28Z" fill="#4F3A32"/><path d="M8 60C12 53 17 50 20.5 49C24 55.5 36 55.5 39.5 49C44 50 49 53 52 60L52 62L8 62Z" fill="#79E2F2"/></g></svg>
<div class="t" style="left:920.0px;top:1400.9px;font-size:35px;color:#0C66E4;letter-spacing:1.25px;-webkit-text-stroke:1.1px #0C66E4;">+ Add dependency</div>
<div class="t" style="left:486.0px;top:1525.9px;font-size:35px;color:#0C66E4;letter-spacing:1.01px;-webkit-text-stroke:1.1px #0C66E4;">Filter by dependencies of FLY-25</div>
<div class="t" style="left:1042.0px;top:1525.9px;font-size:35px;color:#172B4D;">·</div>
<div class="t" style="left:1069.0px;top:1525.9px;font-size:35px;color:#0C66E4;letter-spacing:1.02px;-webkit-text-stroke:1.1px #0C66E4;">Show dependencies for FLY-25</div>
<div class="t" style="left:2058.0px;top:1525.4px;font-size:35px;color:#0C66E4;letter-spacing:0.92px;-webkit-text-stroke:1.1px #0C66E4;">View dependencies as badges</div>
<div class="a" style="left:0px;top:0px;width:3024px;height:140px;background:#fff;border-bottom:2px solid #DCDFE4;"></div>
<svg class="a" style="left:55px;top:49px;" width="40" height="40" viewBox="0 0 40 40"><rect x="0" y="0" width="10" height="10" rx="3" fill="#44546F"/><rect x="0" y="15" width="10" height="10" rx="3" fill="#44546F"/><rect x="0" y="30" width="10" height="10" rx="3" fill="#44546F"/><rect x="15" y="0" width="10" height="10" rx="3" fill="#44546F"/><rect x="15" y="15" width="10" height="10" rx="3" fill="#44546F"/><rect x="15" y="30" width="10" height="10" rx="3" fill="#44546F"/><rect x="30" y="0" width="10" height="10" rx="3" fill="#44546F"/><rect x="30" y="15" width="10" height="10" rx="3" fill="#44546F"/><rect x="30" y="30" width="10" height="10" rx="3" fill="#44546F"/></svg>
<svg class="a" style="left:130.9px;top:43.3px;" width="54.5" height="54.5" viewBox="0 0 24 24"><defs><linearGradient id="jg1" x1="98%" y1="0%" x2="58%" y2="41%"><stop offset="18%" stop-color="#0052CC"/><stop offset="100%" stop-color="#2684FF"/></linearGradient></defs>
<path d="M11.53 2c0 2.4 1.97 4.35 4.35 4.35h1.78v1.7c0 2.4 1.94 4.34 4.34 4.35V2.84a.84.84 0 0 0-.84-.84h-9.63z" fill="#2684FF"/>
<path d="M6.77 6.8a4.362 4.362 0 0 0 4.34 4.34h1.8v1.72a4.362 4.362 0 0 0 4.34 4.34V7.63a.84.84 0 0 0-.83-.83H6.77z" fill="url(#jg1)"/>
<path d="M2 11.6c0 2.4 1.95 4.34 4.35 4.34h1.78v1.72c.01 2.39 1.95 4.34 4.34 4.34v-9.57a.84.84 0 0 0-.84-.84H2z" fill="url(#jg1)"/></svg>
<div class="t" style="left:245.0px;top:52.0px;font-size:35px;color:#44546F;letter-spacing:1.07px;-webkit-text-stroke:0.8px #44546F;">Your work</div>
<svg class="a" style="left:401.4px;top:40.6px;" width="60" height="60" viewBox="0 0 24 24"><path d="M9.2 10.7 L12 13.4 L14.8 10.7" fill="none" stroke="#A5ADBA" stroke-width="2.3" stroke-linecap="round" stroke-linejoin="round"/></svg>
<div class="t" style="left:490.0px;top:52.0px;font-size:35px;color:#44546F;letter-spacing:0.95px;-webkit-text-stroke:0.8px #44546F;">Projects</div>
<svg class="a" style="left:616.4px;top:40.6px;" width="60" height="60" viewBox="0 0 24 24"><path d="M9.2 10.7 L12 13.4 L14.8 10.7" fill="none" stroke="#A5ADBA" stroke-width="2.3" stroke-linecap="round" stroke-linejoin="round"/></svg>
<div class="t" style="left:706.0px;top:52.0px;font-size:35px;color:#44546F;letter-spacing:0.82px;-webkit-text-stroke:0.8px #44546F;">Filters</div>
<svg class="a" style="left:799.4px;top:40.6px;" width="60" height="60" viewBox="0 0 24 24"><path d="M9.2 10.7 L12 13.4 L14.8 10.7" fill="none" stroke="#A5ADBA" stroke-width="2.3" stroke-linecap="round" stroke-linejoin="round"/></svg>
<div class="t" style="left:889.0px;top:52.0px;font-size:35px;color:#44546F;letter-spacing:0.73px;-webkit-text-stroke:0.8px #44546F;">Dashboards</div>
<svg class="a" style="left:1077.4px;top:40.6px;" width="60" height="60" viewBox="0 0 24 24"><path d="M9.2 10.7 L12 13.4 L14.8 10.7" fill="none" stroke="#A5ADBA" stroke-width="2.3" stroke-linecap="round" stroke-linejoin="round"/></svg>
<div class="t" style="left:1167.0px;top:52.0px;font-size:35px;color:#44546F;letter-spacing:0.78px;-webkit-text-stroke:0.8px #44546F;">Teams</div>
<svg class="a" style="left:1266.4px;top:40.6px;" width="60" height="60" viewBox="0 0 24 24"><path d="M9.2 10.7 L12 13.4 L14.8 10.7" fill="none" stroke="#A5ADBA" stroke-width="2.3" stroke-linecap="round" stroke-linejoin="round"/></svg>
<div class="t" style="left:1355.0px;top:52.0px;font-size:35px;color:#0C66E4;letter-spacing:-0.11px;-webkit-text-stroke:0.8px #0C66E4;">Plans</div>
<svg class="a" style="left:1434.4px;top:40.6px;" width="60" height="60" viewBox="0 0 24 24"><path d="M9.2 10.7 L12 13.4 L14.8 10.7" fill="none" stroke="#85B8FF" stroke-width="2.3" stroke-linecap="round" stroke-linejoin="round"/></svg>
<div class="t" style="left:1525.0px;top:52.0px;font-size:35px;color:#44546F;letter-spacing:1.06px;-webkit-text-stroke:0.8px #44546F;">More</div>
<svg class="a" style="left:1601.4px;top:40.6px;" width="60" height="60" viewBox="0 0 24 24"><path d="M9.2 10.7 L12 13.4 L14.8 10.7" fill="none" stroke="#A5ADBA" stroke-width="2.3" stroke-linecap="round" stroke-linejoin="round"/></svg>
<div class="a" style="left:1350px;top:132.3px;width:130px;height:7.7px;background:#0C66E4;border-radius:4px 4px 0 0;"></div>
<div class="a" style="left:1694px;top:29px;width:171px;height:80px;background:#0C66E4;border-radius:8px;"></div>
<div class="t" style="left:1725.0px;top:51.9px;font-size:35px;color:#fff;letter-spacing:0.82px;-webkit-text-stroke:1.2px #fff;">Create</div>
<div class="a" style="left:2074.5px;top:30px;width:498.5px;height:79px;background:#fff;border-radius:12px;border:5px solid #DCDFE4;"></div>
<svg class="a" style="left:2092px;top:48px;" width="43" height="43" viewBox="0 0 24 24"><circle cx="10.5" cy="10.5" r="6.5" fill="none" stroke="#44546F" stroke-width="2.0"/><path d="M15.3 15.4 L19.6 19.8" stroke="#44546F" stroke-width="2.0" stroke-linecap="round"/></svg>
<div class="t" style="left:2154.0px;top:51.4px;font-size:35px;color:#626F86;letter-spacing:-0.15px;">Search</div>
<svg class="a" style="left:2600px;top:50px;" width="60" height="60" viewBox="0 0 60 60"><path d="M8.9 15.6 L48.2 16.6 L33 38.8z" fill="#44546F" stroke="#44546F" stroke-width="1.5" stroke-linejoin="round"/><path d="M14.2 26.5l7.2 7.6a4.6 4.6 0 0 1-7.2-7.6z" fill="#44546F"/></svg>
<div class="a" style="left:2611px;top:26px;width:68px;height:40px;background:#C9372C;border-radius:20px;"></div>
<div class="t" style="left:2627.0px;top:31.8px;font-size:30px;color:#fff;letter-spacing:0.89px;-webkit-text-stroke:0.6px #fff;">9+</div>
<div class="a" style="left:2704px;top:44px;width:50px;height:50px;background:#44546F;border-radius:25px;"></div>
<svg class="a" style="left:2704px;top:44px;" width="50" height="50" viewBox="0 0 50 50"><g transform="translate(25 25)"><path d="M-8.3 -3.5a8.3 8.3 0 1 1 12 7.4c-2.8 1.6-3.7 2.6-3.7 5.6" fill="none" stroke="#fff" stroke-width="4.3" stroke-linecap="round"/><circle cx="0" cy="15" r="2.6" fill="#fff"/></g></svg>
<svg class="a" style="left:2799.2px;top:39.2px;" width="59.2" height="59.2" viewBox="0 0 24 24"><path d="M11.701 16.7a5.002 5.002 0 1 1 0-10.003 5.002 5.002 0 0 1 0 10.004m8.368-3.117a1.995 1.995 0 0 1-1.346-1.885c0-.876.563-1.613 1.345-1.885a.48.48 0 0 0 .315-.574 8.947 8.947 0 0 0-.836-1.993.477.477 0 0 0-.598-.195 2.04 2.04 0 0 1-1.29.08 1.988 1.988 0 0 1-1.404-1.395 2.04 2.04 0 0 1 .076-1.297.478.478 0 0 0-.196-.597 8.98 8.98 0 0 0-1.975-.826.479.479 0 0 0-.574.314 1.995 1.995 0 0 1-1.885 1.346 1.994 1.994 0 0 1-1.884-1.345.482.482 0 0 0-.575-.315c-.708.2-1.379.485-2.004.842a.47.47 0 0 0-.198.582A2.002 2.002 0 0 1 4.445 7.06a.478.478 0 0 0-.595.196 8.946 8.946 0 0 0-.833 1.994.48.48 0 0 0 .308.572 1.995 1.995 0 0 1 1.323 1.877c0 .867-.552 1.599-1.324 1.877a.479.479 0 0 0-.308.57 8.99 8.99 0 0 0 .723 1.79.477.477 0 0 0 .624.194c.595-.273 1.343-.264 2.104.238.117.077.225.185.302.3.527.8.512 1.58.198 2.188a.473.473 0 0 0 .168.628 8.946 8.946 0 0 0 2.11.897.474.474 0 0 0 .57-.313 1.995 1.995 0 0 1 1.886-1.353c.878 0 1.618.567 1.887 1.353a.475.475 0 0 0 .57.313 8.964 8.964 0 0 0 2.084-.883.473.473 0 0 0 .167-.631c-.318-.608-.337-1.393.191-2.195.077-.116.185-.225.302-.302.772-.511 1.527-.513 2.125-.23a.477.477 0 0 0 .628-.19 8.925 8.925 0 0 0 .728-1.793.478.478 0 0 0-.314-.573" fill="#44546F" fill-rule="evenodd"/></svg>
<div class="a" style="left:2904px;top:39px;width:60px;height:60px;background:#00A3BF;border-radius:30px;"></div>
<div class="t" style="left:2923.0px;top:55.3px;font-size:29px;color:#172B4D;-webkit-text-stroke:0.9px #172B4D;transform:scaleX(0.62);transform-origin:0 50%;">CJ</div>
</body></html>
